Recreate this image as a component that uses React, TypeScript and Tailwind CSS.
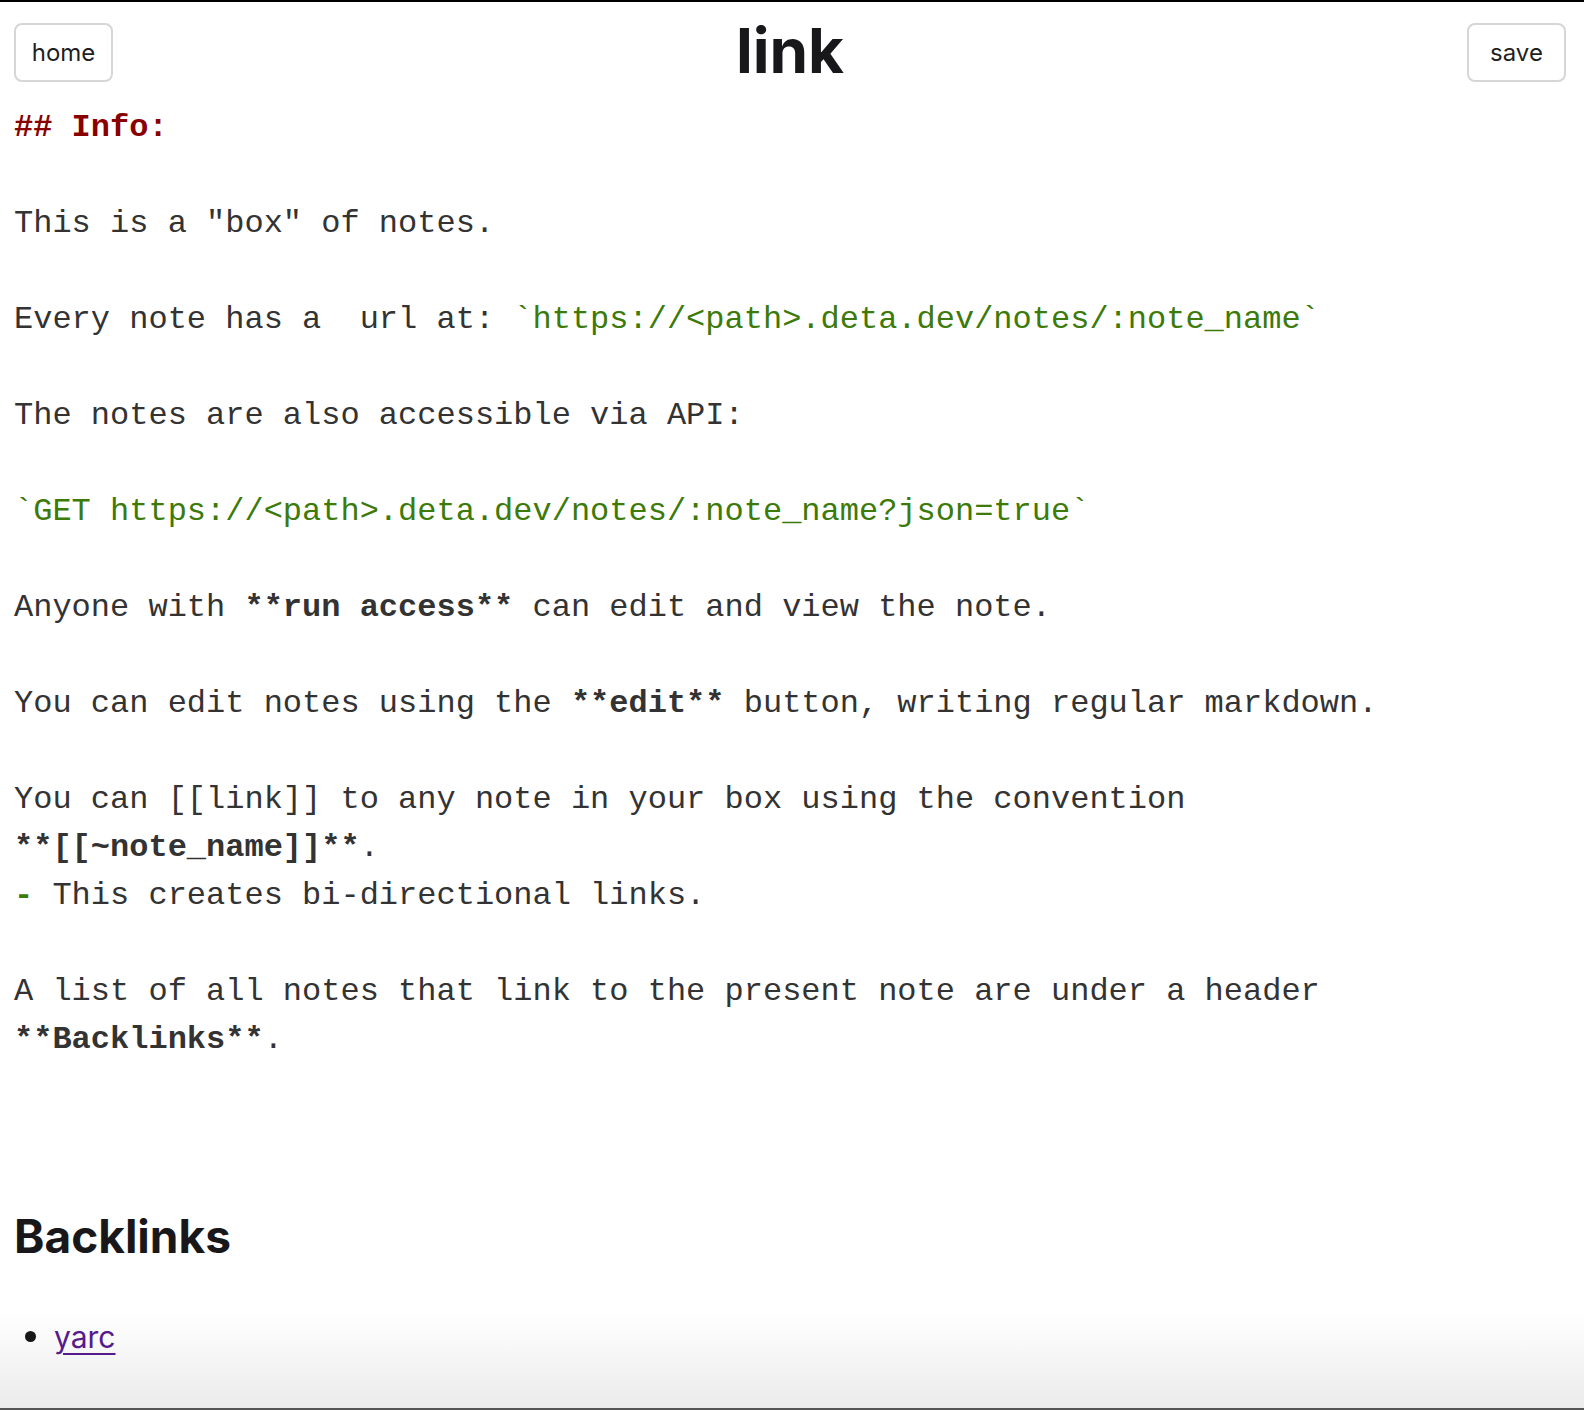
import React from 'react'

type Seg = { t: string; k?: 'h' | 'code' | 'b' | 'dash' }

const lines: Seg[][] = [
  [{ t: '## Info:', k: 'h' }],
  [],
  [{ t: 'This is a "box" of notes.' }],
  [],
  [{ t: 'Every note has a  url at: ' }, { t: '`https://<path>.deta.dev/notes/:note_name`', k: 'code' }],
  [],
  [{ t: 'The notes are also accessible via API:' }],
  [],
  [{ t: '`GET https://<path>.deta.dev/notes/:note_name?json=true`', k: 'code' }],
  [],
  [{ t: 'Anyone with ' }, { t: '**run access**', k: 'b' }, { t: ' can edit and view the note.' }],
  [],
  [{ t: 'You can edit notes using the ' }, { t: '**edit**', k: 'b' }, { t: ' button, writing regular markdown.' }],
  [],
  [{ t: 'You can [[link]] to any note in your box using the convention' }],
  [{ t: '**[[~note_name]]**', k: 'b' }, { t: '.' }],
  [{ t: '-', k: 'dash' }, { t: ' This creates bi-directional links.' }],
  [],
  [{ t: 'A list of all notes that link to the present note are under a header' }],
  [{ t: '**Backlinks**', k: 'b' }, { t: '.' }],
]

const segClass = {
  h: 'font-bold text-[#880000]',
  code: 'text-[#3c7a0a]',
  b: 'font-bold',
  dash: 'font-bold text-[#3c7a0a]',
}

function NavButton({ label }: { label: string }) {
  return (
    <button className="h-[59px] w-[99px] rounded-lg border-2 border-[#d6d6d6] bg-white pt-[2px] text-[24px] text-[#1f1f1f] font-['Inter',sans-serif]">
      {label}
    </button>
  )
}

export default function App() {
  return (
    <div className="h-[1410px] overflow-hidden border-t-2 border-b-2 border-t-black border-b-[#555] bg-[linear-gradient(to_bottom,#ffffff_1310px,#ebebeb_1406px)] font-['Inter',sans-serif]">
      <header className="flex items-center justify-between pl-[14px] pr-[18px] pt-[20px]">
        <NavButton label="home" />
        <h1 className="text-[62px] font-bold leading-none text-[#18181b] -mt-[2px]">link</h1>
        <NavButton label="save" />
      </header>

      <div className="mt-[22px] px-[14px] font-['Liberation_Mono','Courier_New',monospace] text-[32px] leading-[48px] text-[#333] whitespace-pre">
        {lines.map((segs, i) => (
          <div key={i} className="h-[48px]">
            {segs.map((s, j) => (
              <span key={j} className={s.k ? segClass[s.k] : undefined}>
                {s.t}
              </span>
            ))}
          </div>
        ))}
      </div>

      <section className="mt-[143px] px-[14px]">
        <h2 className="text-[46px] font-bold leading-[58px] text-[#18181b]">Backlinks</h2>
        <ul className="mt-[47px] list-disc pl-[40px] text-[30px] leading-[48px] marker:text-[#18181b] marker:text-[34px]">
          <li>
            <a href="#" className="text-[#551a8b] underline underline-offset-[5px] decoration-2">
              yarc
            </a>
          </li>
        </ul>
      </section>
    </div>
  )
}
